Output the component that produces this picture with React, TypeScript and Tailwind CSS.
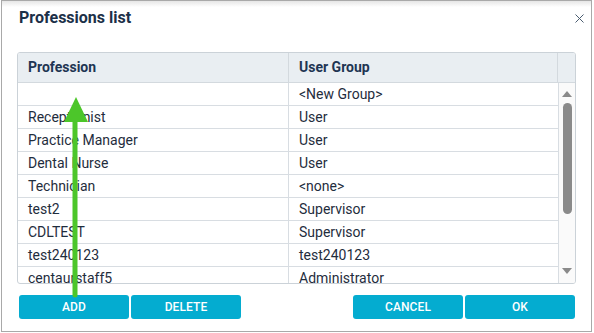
import React from "react";

const rows: [string, string][] = [
  ["", "<New Group>"],
  ["Receptionist", "User"],
  ["Practice Manager", "User"],
  ["Dental Nurse", "User"],
  ["Technician", "<none>"],
  ["test2", "Supervisor"],
  ["CDLTEST", "Supervisor"],
  ["test240123", "test240123"],
  ["centaurstaff5", "Administrator"],
];

function Btn({ label }: { label: string }) {
  return (
    <button className="w-[110px] h-6 rounded-[3px] bg-[#04acd0] text-white text-[12px] font-medium leading-6 tracking-[0.1px]">
      {label}
    </button>
  );
}

export default function App() {
  return (
    <div
      className="w-[594px] h-[333px] bg-white relative"
      style={{ fontFamily: "Roboto, 'Liberation Sans', sans-serif" }}
    >
      <div className="ml-px w-[591px] h-[332px] border border-[#a9a9a9] bg-white flex flex-col relative">
        <div className="absolute left-0 right-0 top-0 h-[6px] bg-gradient-to-b from-[#e6e6e6] to-white pointer-events-none" />
        <div className="relative flex items-start justify-between h-[51px] pl-[17px] pr-[7px]">
          <div className="text-[16px] font-bold text-[#1c3048] leading-[20px] mt-[7px]">
            Professions list
          </div>
          <svg width="9" height="9" viewBox="0 0 9 9" className="mt-[13px]">
            <path d="M0.5 0.5 L8.5 8.5 M8.5 0.5 L0.5 8.5" stroke="#4a5d70" strokeWidth="1" />
          </svg>
        </div>
        <div className="ml-[15px] w-[559px] h-[232px] border border-[#cbd2d8] rounded-[3px] overflow-hidden flex flex-col">
          <div className="flex h-[30px] bg-[#e9eef2] border-b border-[#d3d9de] shrink-0">
            <div className="w-[271px] border-r border-[#d3d9de] pl-[10px] text-[14px] font-bold text-[#1e3553] leading-[29px]">
              Profession
            </div>
            <div className="w-[269px] border-r border-[#d3d9de] pl-[10px] text-[14px] font-bold text-[#1e3553] leading-[29px]">
              User Group
            </div>
            <div className="flex-1" />
          </div>
          <div className="flex flex-1 min-h-0">
            <div className="w-[540px] overflow-hidden">
              {rows.map(([a, b], i) => (
                <div key={i} className="flex h-[23px] border-b border-[#d8dde2] text-[14px] text-[#1f2d3d] leading-[22px]">
                  <div className="w-[271px] border-r border-[#d8dde2] pl-[10px]">{a}</div>
                  <div className="w-[269px] pl-[10px]">{b}</div>
                </div>
              ))}
            </div>
            <div className="flex-1 border-l border-[#d8dde2] bg-[#fafafa] flex flex-col items-center pt-[8px] pb-[9px]">
              <svg width="10" height="6" viewBox="0 0 10 6">
                <path d="M5 0 L10 6 L0 6 Z" fill="#8a8a8a" />
              </svg>
              <div className="w-[9px] h-[111px] mt-[6px] rounded-full bg-[#8a8a8a]" />
              <div className="flex-1" />
              <svg width="10" height="6" viewBox="0 0 10 6">
                <path d="M0 0 L10 0 L5 6 Z" fill="#8a8a8a" />
              </svg>
            </div>
          </div>
        </div>
        <div className="flex justify-between ml-[17px] w-[556px] mt-[11px]">
          <div className="flex gap-[2px]">
            <Btn label="ADD" />
            <Btn label="DELETE" />
          </div>
          <div className="flex gap-[2px]">
            <Btn label="CANCEL" />
            <Btn label="OK" />
          </div>
        </div>
      </div>
      <svg className="absolute left-0 top-0 pointer-events-none" width="594" height="333">
        <line x1="75" y1="115" x2="75" y2="295" stroke="#4cc62a" strokeWidth="5" strokeLinecap="round" />
        <path d="M76 97 L88 122 L64 122 Z" fill="#4cc62a" />
      </svg>
    </div>
  );
}
